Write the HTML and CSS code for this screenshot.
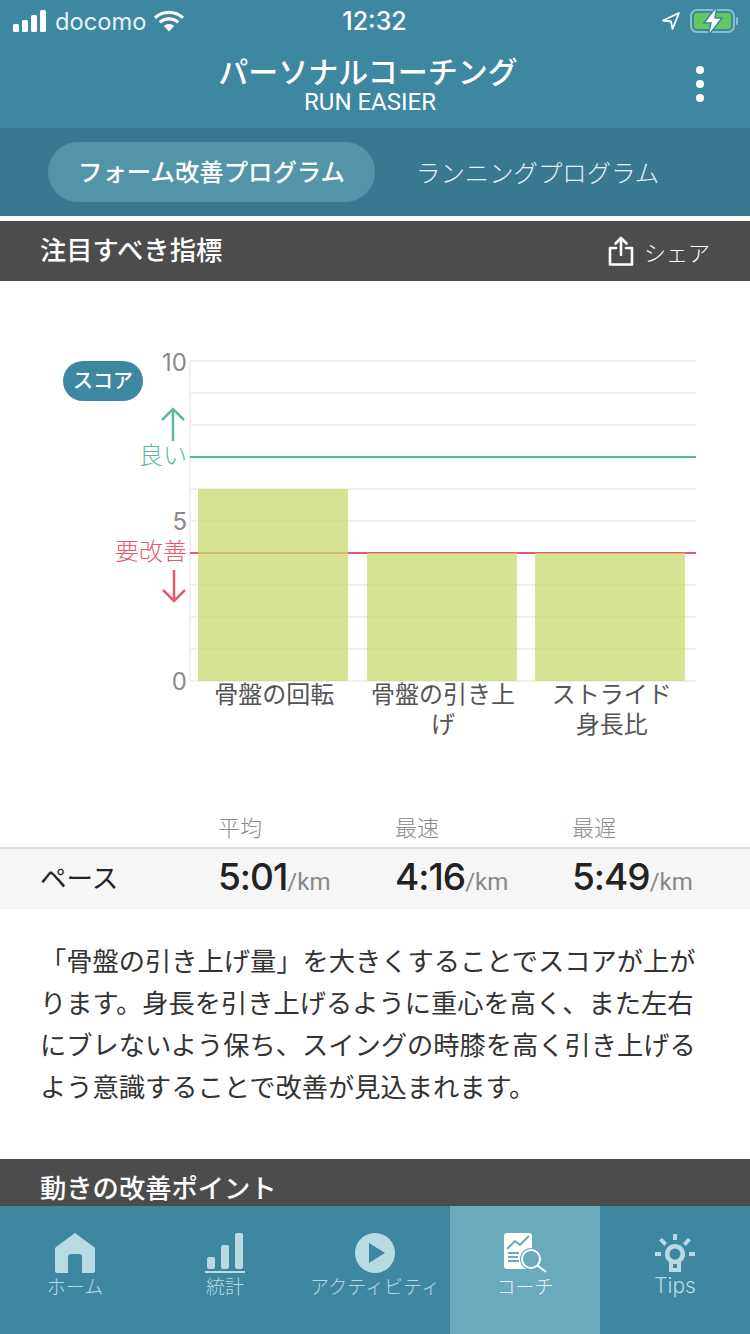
FILE: index.html
```html
<!DOCTYPE html>
<html lang="ja">
<head>
  <meta charset="UTF-8">
  <meta name="viewport" content="width=device-width, initial-scale=1.0">
  <title>パーソナルコーチング</title>
  <link rel="stylesheet" href="styles.css">
</head>
<body>
  <div class="app">
    <div class="status">
      <div class="status-left">
        <svg class="signal" width="34" height="22" viewBox="0 0 34 22"><rect x="0" y="14" width="6" height="8" rx="1.5"/><rect x="9" y="10" width="6" height="12" rx="1.5"/><rect x="18" y="5" width="6" height="17" rx="1.5"/><rect x="27" y="0" width="6" height="22" rx="1.5"/></svg>
        <span class="carrier">docomo</span>
        <svg class="wifi" width="30" height="22" viewBox="0 0 30 22"><path d="M15 4C20 4 24.500 5.800 28 9L30 6.600C26 3 20.800 .8 15 .8S4 3 0 6.600L2 9C5.500 5.800 10 4 15 4Z"/><path d="M15 10.500C18.200 10.500 21 11.700 23.200 13.600L25.300 11.200C22.500 8.800 19 7.300 15 7.300S7.500 8.800 4.700 11.200L6.800 13.600C9 11.700 11.800 10.500 15 10.500Z"/><path d="M15 14C13 14 11.200 14.700 9.800 16L15 21.500 20.200 16C18.800 14.700 17 14 15 14Z"/></svg>
      </div>
      <span class="time">12:32</span>
      <div class="status-right">
        <svg width="20" height="20" viewBox="0 0 20 20"><path d="M18 2 2 9.500 10 10.500 11.500 18Z" fill="none" stroke="#fff" stroke-width="1.800" stroke-linejoin="round"/></svg>
        <svg width="50" height="30" viewBox="0 0 50 30"><rect x="1" y="4" width="43" height="22" rx="6" fill="none" stroke="#8fbccb" stroke-width="2"/><rect x="4" y="7" width="37" height="16" rx="3" fill="#63c85f"/><rect x="46" y="11" width="2" height="8" rx="1" fill="#8fbccb"/><path d="M27 0 14 17H21L18 30 32 12H25Z" fill="#fff" stroke="#3d87a1" stroke-width="1.500"/></svg>
      </div>
    </div>

    <header class="head">
      <h1>パーソナルコーチング</h1>
      <p>RUN EASIER</p>
      <div class="dots"><i></i><i></i><i></i></div>
    </header>

    <nav class="tabs">
      <a class="tab on">フォーム改善プログラム</a>
      <a class="tab">ランニングプログラム</a>
    </nav>

    <main class="content">
      <div class="bar first">
        <h2>注目すべき指標</h2>
        <div class="share">
          <svg width="26" height="30" viewBox="0 0 26 30" fill="none" stroke="#fff" stroke-width="2.600" stroke-linecap="round" stroke-linejoin="round"><path d="M13 19V2M7.500 7.500 13 2l5.500 5.500"/><path d="M8 12H2V28.500H24V12H18"/></svg>
          <span>シェア</span>
        </div>
      </div>

      <div class="chart">
        <svg width="750" height="400" viewBox="0 281 750 400">
          <g class="grid">
            <path d="M190 361H696M190 393H696M190 425H696M190 489H696M190 521H696M190 585H696M190 617H696M190 649H696M190 681H696M190 361V681"/>
          </g>
          <path class="good-line" d="M190 457H696"/>
          <path class="bad-line" d="M190 553H696"/>
          <g class="bars">
            <rect x="198" y="489" width="150" height="192"/>
            <rect x="367" y="553" width="150" height="128"/>
            <rect x="535" y="553" width="150" height="128"/>
          </g>
          <g class="ticks">
            <text x="187" y="371">10</text>
            <text x="187" y="530">5</text>
            <text x="187" y="690">0</text>
          </g>
          <rect class="pill" x="63" y="361" width="80" height="40" rx="20"/>
          <text class="pill-text" x="103" y="388">スコア</text>
          <path class="good-arrow" d="M173 441V410M162 420 173 409 184 420"/>
          <text class="good-text" x="187" y="464">良い</text>
          <text class="bad-text" x="187" y="560">要改善</text>
          <path class="bad-arrow" d="M174 570V601M163 590 174 601 185 590"/>
        </svg>
        <div class="names">
          <span>骨盤の回転</span>
          <span>骨盤の引き上げ</span>
          <span>ストライド<br>身長比</span>
        </div>
      </div>

      <div class="stat-head">
        <span>平均</span><span>最速</span><span>最遅</span>
      </div>
      <div class="stat-row">
        <div class="stat-name">ペース</div>
        <div class="stat"><b>5:01</b><small>/km</small></div>
        <div class="stat"><b>4:16</b><small>/km</small></div>
        <div class="stat"><b>5:49</b><small>/km</small></div>
      </div>

      <p class="note">「骨盤の引き上げ量」を大きくすることでスコアが上がります。身長を引き上げるように重心を高く、また左右にブレないよう保ち、スイングの時膝を高く引き上げるよう意識することで改善が見込まれます。</p>

      <div class="bar">
        <h2>動きの改善ポイント</h2>
      </div>
    </main>

    <footer class="nav">
      <a class="nav-item">
        <svg width="42" height="42" viewBox="0 0 42 42"><path d="M21 0 40 14Q41 15 41 16V38Q41 40 39 40H28V24Q28 21 25 21H17Q14 21 14 24V40H3Q1 40 1 38V16Q1 15 2 14Z"/></svg>
        <span>ホーム</span>
      </a>
      <a class="nav-item">
        <svg width="42" height="42" viewBox="-1 0 42 42"><rect x="2" y="24" width="8" height="12" rx="2"/><rect x="16" y="12" width="8" height="24" rx="2"/><rect x="30" y="0" width="8" height="36" rx="2"/><rect x="0" y="38" width="40" height="2"/></svg>
        <span>統計</span>
      </a>
      <a class="nav-item">
        <svg width="42" height="42" viewBox="0 0 42 42"><path fill-rule="evenodd" d="M21 0a20 20 0 1 0 0 40a20 20 0 1 0 0-40ZM15 10 31 20 15 30Z"/></svg>
        <span>アクティビティ</span>
      </a>
      <a class="nav-item on">
        <svg width="44" height="42" viewBox="-1 0 44 42"><rect x="0" y="0" width="28" height="36" rx="3" fill="#fff"/><path d="M3 16 11 8 16 12 25 3" fill="none" stroke="#69aabd" stroke-width="2"/><path d="M4 20H15M4 24H14M4 28H15" stroke="#69aabd" stroke-width="2"/><circle cx="27" cy="26" r="11" fill="#69aabd"/><circle cx="27" cy="26" r="9" fill="#69aabd" stroke="#fff" stroke-width="2"/><path d="M33 32 42 39" stroke="#fff" stroke-width="2"/></svg>
        <span>コーチ</span>
      </a>
      <a class="nav-item">
        <svg width="42" height="42" viewBox="0 0 42 42"><path d="M19 1H23V7H19ZM5 7.500 8 5 13 10 10.500 13ZM37 7.500 34 5 29 10 31.500 13ZM1 19H7V23H1ZM35 19H41V23H35Z"/><path fill-rule="evenodd" d="M21 11a10 10 0 0 0-6 18V39H27V29a10 10 0 0 0-6-18ZM21 15.500a5.500 5.500 0 1 1 0 11a5.500 5.500 0 1 1 0-11ZM19 31H23V35H19Z"/></svg>
        <span class="latin">Tips</span>
      </a>
    </footer>
  </div>
</body>
</html>
```
FILE: styles.css
```css
* {padding: 0; margin: 0; box-sizing: border-box;}

html,body {
  width: 750px;
  height: 1334px;
  overflow: hidden;
  background: #fff;
  font-family: "Noto Sans CJK JP", sans-serif;
}
.app {
  display: flex;
  flex-direction: column;
  width: 750px;
  height: 1334px;
}

/* status bar */
.status {
  display: flex;
  justify-content: space-between;
  align-items: center;
  height: 42px;
  padding: 0 10px 0 13px;
  background: #3d87a1;
  color: #fff;
  position: relative;
}
.status-left {
  display: flex;
  align-items: center;
  gap: 8px;
}
.status-left svg {fill: #fff;}
.carrier {
  font-family: Inter, sans-serif;
  font-size: 23.7px;
  color: #e6f0f4;
}
.time {
  position: absolute;
  left: 0;
  right: 0;
  padding-right: 1px;
  text-align: center;
  font-family: Inter, sans-serif;
  font-size: 25px;
  font-weight: 500;
}
.status-right {
  display: flex;
  align-items: center;
  gap: 9px;
}

/* header */
.head {
  position: relative;
  height: 86px;
  padding: 10px 10px 0 0;
  background: #3d87a1;
  color: #fff;
  text-align: center;
}
.head h1 {
  margin-right: 4px;
  font-size: 30px;
  font-weight: 500;
  line-height: 36px;
}
.head p {
  margin-top: 2px;
  font-family: Roboto, sans-serif;
  font-size: 24px;
  line-height: 24px;
}
.dots {
  position: absolute;
  top: 24px;
  right: 46px;
  display: flex;
  flex-direction: column;
  gap: 6px;
}
.dots i {
  display: block;
  width: 8px;
  height: 8px;
  border-radius: 50%;
  background: #fff;
}

/* tabs */
.tabs {
  display: flex;
  align-items: center;
  gap: 41px;
  height: 88px;
  padding-left: 48px;
  background: #387992;
}
.tab {
  font-size: 24.4px;
  line-height: 58px;
  font-weight: 300;
  color: #e8f1f4;
}
.tab.on {
  width: 327px;
  height: 60px;
  border-radius: 30px;
  background: #5295a8;
  color: #fff;
  font-weight: 500;
  text-align: center;
}

/* content */
.content {
  flex: 1;
  overflow: hidden;
}
.bar {
  display: flex;
  justify-content: space-between;
  align-items: center;
  height: 60px;
  padding: 0 40px;
  background: #4c4c4c;
  color: #fff;
}
.bar.first {margin-top: 5px;}
.bar h2 {
  margin-bottom: 5px;
  font-size: 26.300px;
  font-weight: 500;
  line-height: 34px;
}
.share {
  display: flex;
  align-items: center;
  gap: 10px;
  font-size: 22px;
  font-weight: 300;
}

/* chart */
.chart {
  height: 533px;
}
.chart svg {display: block; overflow: visible;}
.grid path {fill: none; stroke: #f0f0f0; stroke-width: 2;}
.good-line {stroke: #5ab89f; stroke-width: 2;}
.bad-line {stroke: #e8596e; stroke-width: 2;}
.bars rect {fill: #c5d96a; fill-opacity: .72;}
.ticks text {
  font-family: Inter, sans-serif;
  font-size: 24px;
  fill: #8a8a8a;
  text-anchor: end;
}
.pill {fill: #3d87a1;}
.pill-text {
  font-size: 20px;
  font-weight: 500;
  fill: #fff;
  text-anchor: middle;
}
.good-arrow {fill: none; stroke: #5ab89f; stroke-width: 2.500;}
.bad-arrow {fill: none; stroke: #e8596e; stroke-width: 2.500;}
.good-text {font-size: 24px; font-weight: 300; fill: #5ab89f; text-anchor: end;}
.bad-text {font-size: 24px; font-weight: 300; fill: #e8596e; text-anchor: end;}
.names {
  display: grid;
  grid-template-columns: repeat(3, 1fr);
  margin-top: -3px;
  padding: 0 54px 0 190px;
  font-size: 24px;
  line-height: 30px;
  color: #555;
  text-align: center;
}
.names span {padding: 0 6px;}

/* pace table */
.stat-head {
  display: flex;
  align-items: center;
  height: 33px;
  padding: 0 0 9px 218px;
  font-size: 22px;
  font-weight: 300;
  line-height: 24px;
  color: #8c8c8c;
}
.stat-head span {width: 177px;}
.stat-row {
  display: flex;
  align-items: center;
  height: 62px;
  padding: 0 0 6px 40px;
  border-top: 2px solid #dcdcdc;
  background: #f6f6f6;
  color: #222;
}
.stat-name {
  width: 178px;
  font-size: 26.500px;
  font-weight: 400;
}
.stat {width: 177px;}
.stat b {
  font-family: Inter, sans-serif;
  font-size: 37px;
  font-weight: 500;
  letter-spacing: -1px;
}
.stat small {
  font-family: Roboto, sans-serif;
  font-size: 24px;
  color: #888;
}

.note {
  height: 250px;
  padding: 30px 40px 0;
  font-size: 26.250px;
  line-height: 42px;
  color: #333;
}

/* bottom nav */
.nav {
  display: flex;
  height: 128px;
  background: #3d87a1;
}
.nav-item {
  display: flex;
  flex-direction: column;
  align-items: center;
  width: 150px;
  padding-top: 27px;
  font-size: 19px;
  font-weight: 300;
  line-height: 24px;
  color: #b8dae3;
}
.nav-item svg {fill: #b8dae3; display: block; margin-bottom: -1px;}
.nav-item.on {
  background: #69aabd;
  color: #eaf4f7;
}
.latin {
  font-family: Inter, sans-serif;
  font-size: 21px;
}
```
